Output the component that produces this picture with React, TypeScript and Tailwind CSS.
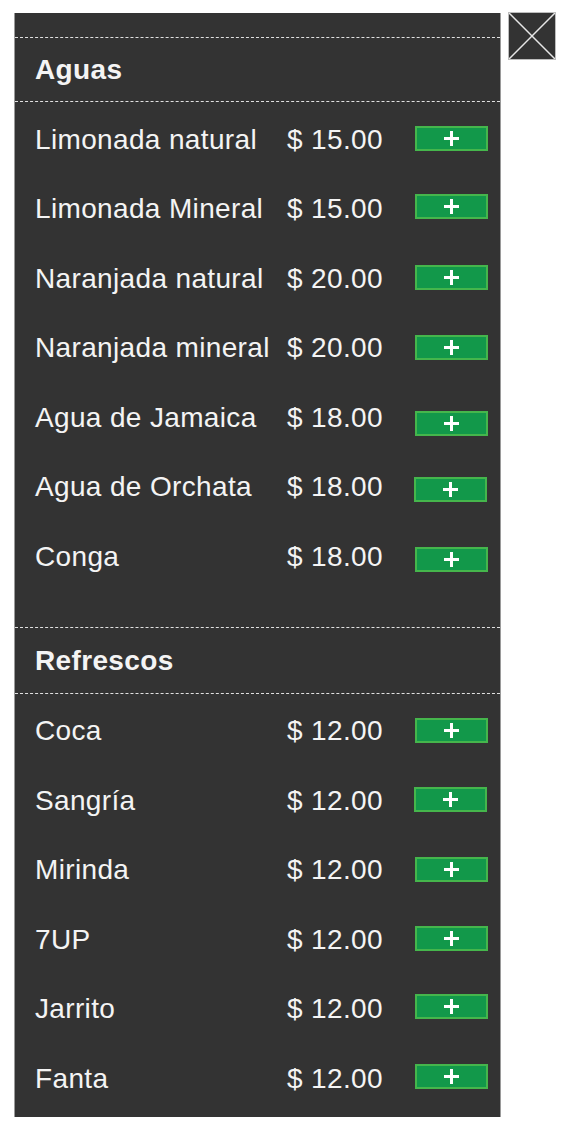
import React from 'react';

type Item = { name: string; price: string; btn?: string };

// bebidas del menú
const aguas: Item[] = [
  { name: 'Limonada natural', price: '$ 15.00' },
  { name: 'Limonada Mineral', price: '$ 15.00', btn: 'mb-[4px]' },
  { name: 'Naranjada natural', price: '$ 20.00' },
  { name: 'Naranjada mineral', price: '$ 20.00' },
  { name: 'Agua de Jamaica', price: '$ 18.00', btn: 'mt-[14px]' },
  { name: 'Agua de Orchata', price: '$ 18.00', btn: 'mt-[6px] -ml-[1px]' },
  { name: 'Conga', price: '$ 18.00', btn: 'mt-[8px]' },
];

const refrescos: Item[] = [
  { name: 'Coca', price: '$ 12.00' },
  { name: 'Sangría', price: '$ 12.00', btn: '-ml-[1px]' },
  { name: 'Mirinda', price: '$ 12.00' },
  { name: '7UP', price: '$ 12.00' },
  { name: 'Jarrito', price: '$ 12.00', btn: 'mb-[4px]' },
  { name: 'Fanta', price: '$ 12.00', btn: 'mb-[2px]' },
];

function AddButton({ extra }: { extra?: string }) {
  return (
    <button
      className={`flex h-[25px] w-[73px] items-center justify-center self-center border-2 border-[#45b64c] bg-[#12984a] ${extra ?? ''}`}
    >
      <svg width="15" height="15" viewBox="0 0 15 15">
        <rect x="6" y="0" width="3" height="15" fill="#ffffff" />
        <rect x="0" y="6" width="15" height="3" fill="#ffffff" />
      </svg>
    </button>
  );
}

function Row({ item }: { item: Item }) {
  return (
    <div className="grid h-[69.5px] grid-cols-[252px_128px_73px] items-center">
      <span className="whitespace-nowrap pt-[2px]">{item.name}</span>
      <span className="whitespace-nowrap pt-[2px]">{item.price}</span>
      <AddButton extra={item.btn} />
    </div>
  );
}

export default function App() {
  return (
    <div
      className="min-h-[1129px] bg-white pl-[14px] pt-[13px]"
      style={{ fontFamily: '"Liberation Sans", Arial, sans-serif' }}
    >
      <div className="flex items-start">
        {/* Panel */}
        <div className="w-[487px] border-x border-[#9a9a9a] bg-[#333333] pt-[24px] text-[28px] leading-none tracking-[0.35px] text-[#f4f4f4]">
          <div className="border-t border-dashed border-[#e0e0e0]" />
          <div className="flex h-[63px] items-center pl-[20px] font-bold">Aguas</div>
          <div className="border-t border-dashed border-[#e0e0e0]" />
          <div className="pb-[36.5px] pl-[20px] pt-[2px]">
            {aguas.map((item) => (
              <Row key={item.name} item={item} />
            ))}
          </div>

          <div className="border-t border-dashed border-[#e0e0e0]" />
          <div className="flex h-[65px] items-center pl-[20px] font-bold">Refrescos</div>
          <div className="border-t border-dashed border-[#e0e0e0]" />
          <div className="pb-[4.5px] pl-[20px] pt-[1.5px]">
            {refrescos.map((item) => (
              <Row key={item.name} item={item} />
            ))}
          </div>
        </div>

        {/* Close box */}
        <div className="-mt-[1px] ml-[7px] h-[48px] w-[48px] border border-[#bdbdbd] bg-[#333333]">
          <svg width="46" height="46" viewBox="0 0 46 46">
            <line x1="0" y1="0" x2="46" y2="46" stroke="#e6e6e6" strokeWidth="1.5" />
            <line x1="46" y1="0" x2="0" y2="46" stroke="#e6e6e6" strokeWidth="1.5" />
          </svg>
        </div>
      </div>
    </div>
  );
}
